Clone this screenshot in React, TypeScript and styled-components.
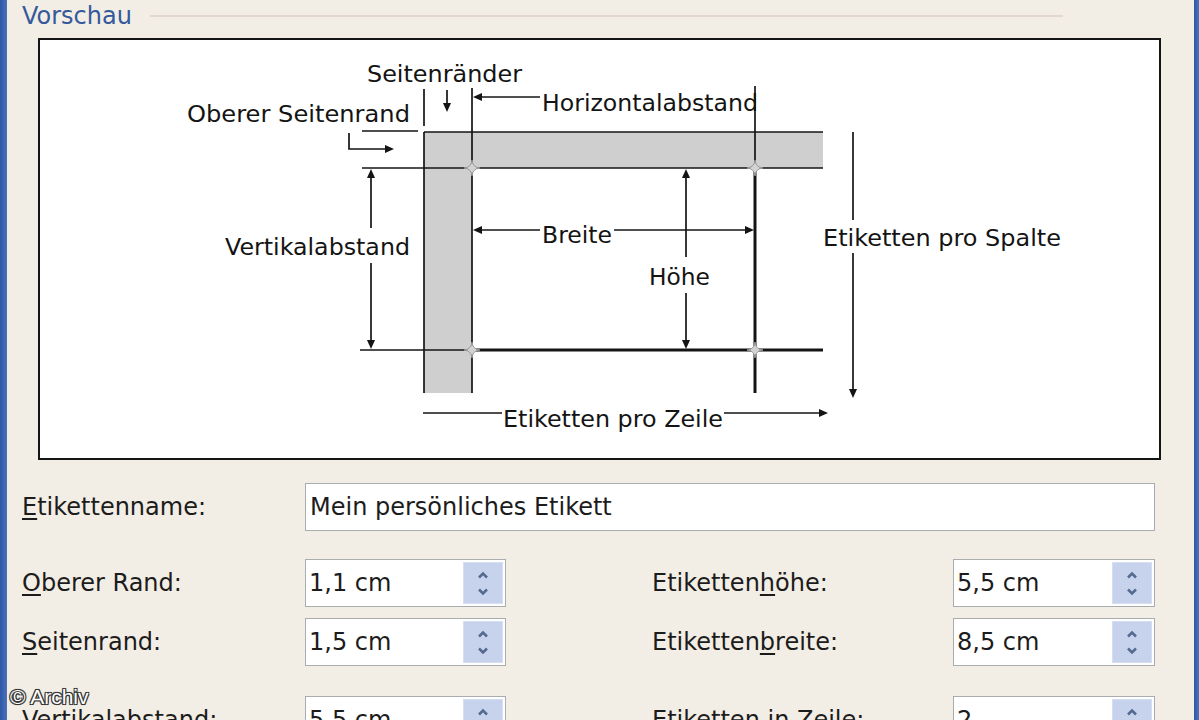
import React from 'react';
import styled, { createGlobalStyle } from 'styled-components';

const GlobalStyle = createGlobalStyle`
  html, body {
    margin: 0;
    padding: 0;
    background: #f2eee5;
    overflow: hidden;
  }
  body {
    font-family: "DejaVu Sans", Verdana, sans-serif;
  }
`;

const Frame = styled.div`
  position: relative;
  display: flex;
  width: 1199px;
  height: 720px;
  overflow: hidden;
  background: #f2eee5;
`;

const Edge = styled.div<{ $w: number }>`
  flex-shrink: 0;
  width: ${p => p.$w}px;
  background: linear-gradient(to right, #2d57a6, #4a72bb);
`;

const Content = styled.div`
  flex: 1;
  min-width: 0;
  padding: 2px 0 0 15px;
`;

const TitleRow = styled.div`
  display: flex;
  align-items: center;
  height: 28px;
  margin-right: 131px;
`;

const Title = styled.span`
  font-size: 24px;
  line-height: 28px;
  color: #35599a;
`;

const TitleLine = styled.div`
  flex: 1;
  height: 2px;
  margin-left: 18px;
  background: #e2d8d1;
`;

const Preview = styled.div`
  box-sizing: border-box;
  width: 1123px;
  height: 422px;
  margin: 8px 0 0 16px;
  border: 2px solid #151515;
  background: #fff;
`;

const Diagram = styled.svg`
  display: block;
`;

const FieldRow = styled.div<{ $top: number }>`
  display: grid;
  grid-template-columns: 283px 201px 146px 301px 202px;
  align-items: center;
  height: 48px;
  margin-top: ${p => p.$top}px;
`;

const Label = styled.label<{ $col?: number }>`
  grid-column: ${p => p.$col ?? 1};
  font-size: 24px;
  color: #1c1c1c;
  white-space: nowrap;
`;

const Key = styled.span`
  text-decoration: underline;
  text-underline-offset: 3px;
  text-decoration-thickness: 2px;
`;

const TextBox = styled.div`
  grid-column: 2 / 6;
  box-sizing: border-box;
  height: 48px;
  display: flex;
  align-items: center;
  padding: 0 4px;
  border: 1px solid #a9adb0;
  background: #fff;
  font-size: 24px;
  color: #1c1c1c;
`;

const Spinner = styled.div<{ $col: number }>`
  grid-column: ${p => p.$col};
  box-sizing: border-box;
  height: 48px;
  display: flex;
  align-items: stretch;
  padding: 2px 2px 2px 0;
  border: 1px solid #a9adb0;
  background: #fff;
`;

const SpinValue = styled.div`
  flex: 1;
  display: flex;
  align-items: center;
  padding-left: 3px;
  font-size: 24px;
  color: #1c1c1c;
`;

const SpinButtons = styled.div`
  box-sizing: border-box;
  width: 40px;
  display: flex;
  flex-direction: column;
  align-items: center;
  justify-content: center;
  gap: 9px;
  border: 1px solid #d6dff2;
  background: #c7d3ed;
`;

const Watermark = styled.div`
  position: absolute;
  left: 10px;
  top: 685px;
  font-family: "Liberation Sans", Arial, sans-serif;
  font-size: 21px;
  color: #fff;
  text-shadow: -1px -1px 0 #333, 1px -1px 0 #333, -1px 1px 0 #333, 1px 1px 0 #333,
    0 0 2px #000;
`;

const ink = '#141414';

function Head({ x, y, dir }: { x: number; y: number; dir: 'up' | 'down' | 'left' | 'right' }) {
  const pts = {
    up: [x, y, x - 4, y + 9, x + 4, y + 9],
    down: [x, y, x - 4, y - 9, x + 4, y - 9],
    left: [x, y, x + 9, y - 4, x + 9, y + 4],
    right: [x, y, x - 9, y - 4, x - 9, y + 4],
  }[dir];
  return <polygon points={pts.join(' ')} fill={ink} />;
}

// rounded label corners meeting at a grid crossing
function Joint({ x, y }: { x: number; y: number }) {
  const r = 8;
  const d = `M${x - r} ${y} A${r} ${r} 0 0 0 ${x} ${y - r} A${r} ${r} 0 0 0 ${x + r} ${y} A${r} ${r} 0 0 0 ${x} ${y + r} A${r} ${r} 0 0 0 ${x - r} ${y} Z`;
  return <path d={d} fill="#d2d2d2" stroke="#9a9a9a" strokeWidth={1} />;
}

const texts = [
  { t: 'Seitenränder', x: 367, y: 82, w: 155 },
  { t: 'Oberer Seitenrand', x: 187, y: 122, w: 223 },
  { t: 'Horizontalabstand', x: 542, y: 111, w: 216 },
  { t: 'Vertikalabstand', x: 225, y: 255, w: 185 },
  { t: 'Breite', x: 542, y: 243, w: 70 },
  { t: 'Höhe', x: 649, y: 285, w: 61 },
  { t: 'Etiketten pro Spalte', x: 823, y: 246, w: 238 },
  { t: 'Etiketten pro Zeile', x: 503, y: 427, w: 220 },
];

function LabelDiagram() {
  const thin = { stroke: ink, strokeWidth: 1.7 };
  const thick = { stroke: ink, strokeWidth: 3 };
  return (
    <Diagram width={1119} height={418} viewBox="40 40 1119 418">
      {/* page margin band */}
      <rect x={424} y={132} width={48} height={261} fill="#cfcfcf" />
      <rect x={424} y={132} width={399} height={36} fill="#cfcfcf" />
      <line x1={424} y1={132} x2={823} y2={132} {...thin} />
      <line x1={424} y1={132} x2={424} y2={393} {...thin} />

      {/* label grid */}
      <line x1={362} y1={168} x2={823} y2={168} {...thin} />
      <line x1={360} y1={350} x2={472} y2={350} {...thin} />
      <line x1={472} y1={350} x2={823} y2={350} {...thick} />
      <line x1={472} y1={88} x2={472} y2={393} {...thin} />
      <line x1={755} y1={86} x2={755} y2={168} {...thin} />
      <line x1={755} y1={168} x2={755} y2={393} {...thick} />

      {/* Seitenränder */}
      <line x1={424} y1={89} x2={424} y2={126} {...thin} />
      <line x1={447} y1={90} x2={447} y2={104} {...thin} />
      <Head x={447} y={112} dir="down" />

      {/* Oberer Seitenrand */}
      <line x1={362} y1={131} x2={418} y2={131} {...thin} />
      <polyline points="349,133 349,149 386,149" fill="none" {...thin} />
      <Head x={394} y={149} dir="right" />

      {/* Horizontalabstand */}
      <line x1={478} y1={97} x2={540} y2={97} {...thin} />
      <Head x={473} y={97} dir="left" />

      {/* Vertikalabstand */}
      <line x1={371} y1={175} x2={371} y2={228} {...thin} />
      <line x1={371} y1={263} x2={371} y2={343} {...thin} />
      <Head x={371} y={169} dir="up" />
      <Head x={371} y={349} dir="down" />

      {/* Breite */}
      <line x1={478} y1={230} x2={540} y2={230} {...thin} />
      <line x1={614} y1={230} x2={748} y2={230} {...thin} />
      <Head x={473} y={230} dir="left" />
      <Head x={754} y={230} dir="right" />

      {/* Höhe */}
      <line x1={686} y1={175} x2={686} y2={257} {...thin} />
      <line x1={686} y1={293} x2={686} y2={343} {...thin} />
      <Head x={686} y={169} dir="up" />
      <Head x={686} y={349} dir="down" />

      {/* Etiketten pro Spalte */}
      <line x1={853} y1={132} x2={853} y2={220} {...thin} />
      <line x1={853} y1={253} x2={853} y2={390} {...thin} />
      <Head x={853} y={398} dir="down" />

      {/* Etiketten pro Zeile */}
      <line x1={423} y1={413} x2={502} y2={413} {...thin} />
      <line x1={724} y1={413} x2={820} y2={413} {...thin} />
      <Head x={828} y={413} dir="right" />

      <Joint x={472} y={168} />
      <Joint x={755} y={168} />
      <Joint x={472} y={350} />
      <Joint x={755} y={350} />

      {texts.map(t => (
        <text
          key={t.t}
          x={t.x}
          y={t.y}
          textLength={t.w}
          lengthAdjust="spacingAndGlyphs"
          fontFamily="'DejaVu Sans', Verdana, sans-serif"
          fontSize={23}
          fill={ink}
        >
          {t.t}
        </text>
      ))}
    </Diagram>
  );
}

function Chevron({ up }: { up?: boolean }) {
  return (
    <svg width="12" height="8" viewBox="0 0 12 8">
      <path
        d={up ? 'M2 6.5 L6 2.5 L10 6.5' : 'M2 1.5 L6 5.5 L10 1.5'}
        fill="none"
        stroke="#566a91"
        strokeWidth={2.6}
      />
    </svg>
  );
}

function SpinField({ value, col }: { value: string; col: number }) {
  return (
    <Spinner $col={col}>
      <SpinValue>{value}</SpinValue>
      <SpinButtons>
        <Chevron up />
        <Chevron />
      </SpinButtons>
    </Spinner>
  );
}

export default function App() {
  return (
    <Frame>
      <GlobalStyle />
      <Edge $w={7} />
      <Content>
        <TitleRow>
          <Title>Vorschau</Title>
          <TitleLine />
        </TitleRow>
        <Preview>
          <LabelDiagram />
        </Preview>

        <FieldRow $top={23}>
          <Label><Key>E</Key>tikettenname:</Label>
          <TextBox>Mein persönliches Etikett</TextBox>
        </FieldRow>

        <FieldRow $top={28}>
          <Label><Key>O</Key>berer Rand:</Label>
          <SpinField value="1,1 cm" col={2} />
          <Label $col={4}>Etiketten<Key>h</Key>öhe:</Label>
          <SpinField value="5,5 cm" col={5} />
        </FieldRow>

        <FieldRow $top={11}>
          <Label><Key>S</Key>eitenrand:</Label>
          <SpinField value="1,5 cm" col={2} />
          <Label $col={4}>Etiketten<Key>b</Key>reite:</Label>
          <SpinField value="8,5 cm" col={5} />
        </FieldRow>

        <FieldRow $top={30}>
          <Label>Vertikalabstand:</Label>
          <SpinField value="5,5 cm" col={2} />
          <Label $col={4}>Etiketten in Zeile:</Label>
          <SpinField value="2" col={5} />
        </FieldRow>
      </Content>
      <Edge $w={5} />
      <Watermark>© Archiv</Watermark>
    </Frame>
  );
}
